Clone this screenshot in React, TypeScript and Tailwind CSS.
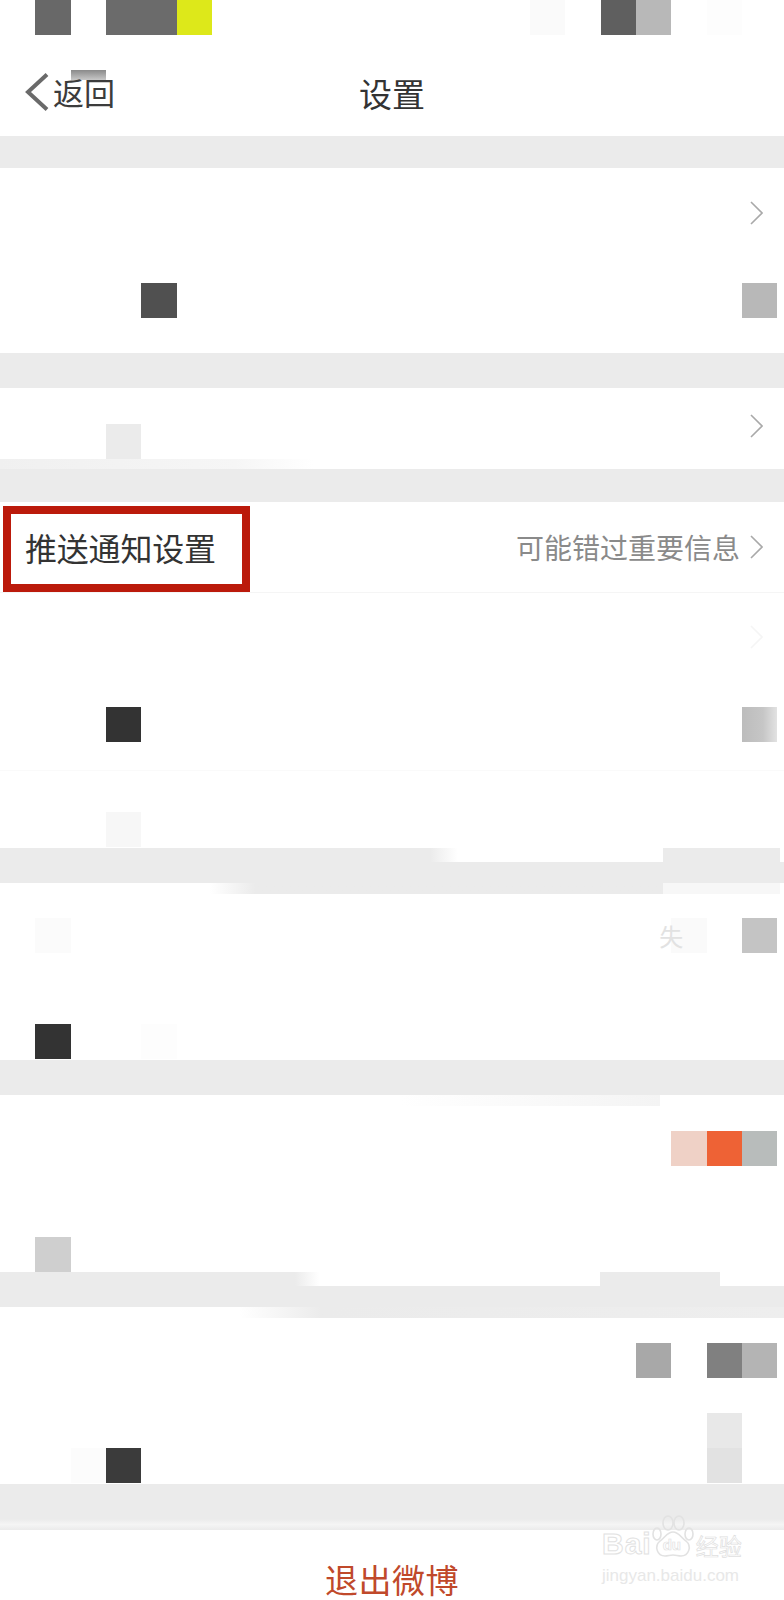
const cjk = 'font-["Noto_Sans_CJK_SC","Noto_Sans",sans-serif]';

const Chevron = ({ className = 'stroke-[#a9a9a9]' }: { className?: string }) => (
  <svg width="13" height="24" viewBox="0 0 13 24" fill="none" className={'block ' + className}>
    <polyline points="1,1 12,12 1,23" strokeWidth="1.6" />
  </svg>
);

const TileRow = ({ className = '', children }: { className?: string; children: React.ReactNode }) => (
  <div className={'grid grid-cols-[repeat(22,35.33px)] ' + className}>{children}</div>
);

const Tile = ({ className, children }: { className: string; children?: React.ReactNode }) => (
  <div className={'h-[35px] ' + className}>{children}</div>
);

// grey separators, smeared by the mosaic at their edges
const Band = ({ className }: { className: string }) => <div className={'bg-[#ebebeb] ' + className} />;

const Paw = () => (
  <svg width="44" height="44" viewBox="0 0 44 44" fill="none" stroke="#e2e2e2" strokeWidth="1.6" className="block">
    <ellipse cx="17" cy="8" rx="5" ry="7" />
    <ellipse cx="28" cy="8" rx="5" ry="7" />
    <ellipse cx="6" cy="19" rx="4" ry="6" />
    <ellipse cx="38" cy="19" rx="4" ry="6" />
    <path d="M22 17c6 0 8 6 13 9 6 5 3 15-5 15-3 0-5-1-8-1s-5 1-8 1c-8 0-11-10-5-15 5-3 7-9 13-9z" />
  </svg>
);

export default function App() {
  return (
    <div className={'relative w-[784px] h-[1600px] overflow-hidden bg-white ' + cjk}>
      {/* status bar */}
      <TileRow>
        <Tile className="col-start-2 bg-[#686868]" />
        <Tile className="col-start-4 bg-[#6b6b6b]" />
        <Tile className="col-start-5 bg-[#6b6b6b]" />
        <Tile className="col-start-6 bg-[#dde81a]" />
        <Tile className="col-start-16 bg-[#fafafa]" />
        <Tile className="col-start-18 bg-[#5f5f5f]" />
        <Tile className="col-start-19 bg-[#b8b8b8]" />
        <Tile className="col-start-21 bg-[#fdfdfd]" />
      </TileRow>

      {/* nav */}
      <div className="relative flex items-center justify-center h-[101px]">
        <div className="absolute left-[25px] top-[38px] flex items-center gap-[4px]">
          <svg width="24" height="38" viewBox="0 0 24 38" fill="none" stroke="#6a6a6a" strokeWidth="4" className="block">
            <polyline points="22,1.5 3,19 22,36.5" />
          </svg>
          <span className="relative text-[31px] leading-[38px] text-[#3c3c3c]">
            <span className="absolute left-[18px] top-[-3px] w-[35px] h-[10px] bg-linear-to-b from-[#8a8a8a] to-[#c8c8c8]" />
            <span className="relative">返回</span>
          </span>
        </div>
        <span className="text-[33px] leading-[40px] text-[#333333] mt-[14px]">设置</span>
      </div>

      <Band className="h-8" />

      {/* group 1 */}
      <div className="h-[185px] pt-[33px]">
        <div className="flex justify-end pr-[21px]">
          <Chevron />
        </div>
        <TileRow className="mt-[58px]">
          <Tile className="col-start-5 bg-[#505050]" />
          <Tile className="col-start-22 bg-[#b8b8b8]" />
        </TileRow>
      </div>

      <Band className="h-[35px]" />

      {/* group 2 */}
      <TileRow className="h-[71px] pt-[26px]">
        <Tile className="col-start-4 mt-[10px] bg-[#ebebeb]" />
        <div className="col-start-22 ml-2">
          <Chevron />
        </div>
      </TileRow>
      <div className="h-[10px] bg-linear-to-r from-[#f0f0f0] via-[#f6f6f6] via-30% to-white to-40%" />
      <Band className="h-[33px]" />

      {/* push settings row */}
      <div className="flex h-[91px] items-end justify-between border-b border-[#f5f5f5]">
        <div className="ml-[3px] flex h-[86px] w-[247px] items-center border-[8px] border-[#bb1a0b] pb-[4px] pl-[14px]">
          <span className="text-[32px] leading-[40px] tracking-[-0.2px] text-[#333333] whitespace-nowrap">推送通知设置</span>
        </div>
        <div className="flex h-[90px] items-center gap-[10px] pr-[21px]">
          <span className="text-[28px] leading-[36px] text-[#8a8a8a] whitespace-nowrap">可能错过重要信息</span>
          <Chevron />
        </div>
      </div>

      {/* group 3 */}
      <div className="h-[255px] pt-[32px]">
        <div className="flex justify-end pr-[21px]">
          <Chevron className="stroke-[#f5f5f5]" />
        </div>
        <TileRow className="mt-[58px]">
          <Tile className="col-start-4 bg-[#333333]" />
          <Tile className="col-start-22 bg-linear-to-r from-[#bcbcbc] via-[#c6c6c6] via-60% to-[#e2e2e2]" />
        </TileRow>
        <div className="h-[29px] border-b border-[#fafafa]" />
        <TileRow className="mt-[41px]">
          <Tile className="col-start-4 bg-[#f7f7f7]" />
        </TileRow>
      </div>

      {/* band 3 */}
      <div className="flex h-[14px]">
        <Band className="w-[430px]" />
        <div className="w-[233px] bg-linear-to-r from-[#ebebeb] to-white to-12%" />
        <Band className="w-[117px]" />
      </div>
      <Band className="h-[21px]" />

      {/* group 4 */}
      <div className="relative h-[177px]">
        <div className="absolute left-[210px] top-0 flex h-[11px] w-[570px]">
          <div className="w-[453px] bg-linear-to-r from-white via-[#ebebeb] via-10% to-[#ebebeb]" />
          <div className="flex-1 bg-[#f7f7f7]" />
        </div>
        <TileRow className="pt-[35px]">
          <Tile className="col-start-2 bg-[#fbfbfb]" />
          <Tile className="col-start-20 bg-[#fafafa]">
            <span className="-ml-3 block text-[24px] leading-[35px] text-[#e2e2e2]">失</span>
          </Tile>
          <Tile className="col-start-22 bg-[#c4c4c4]" />
        </TileRow>
        <TileRow className="mt-[71px]">
          <Tile className="col-start-2 bg-[#333333]" />
          <Tile className="col-start-5 bg-[#fdfdfd]" />
        </TileRow>
      </div>

      <Band className="h-[35px]" />

      {/* group 5 */}
      <div className="relative h-[177px] pt-[36px]">
        <div className="absolute left-[400px] top-0 h-[11px] w-[260px] bg-linear-to-r from-white to-[#f4f4f4]" />
        <TileRow>
          <Tile className="col-start-20 bg-[#efd1c6]" />
          <Tile className="col-start-21 bg-[#ee6235]" />
          <Tile className="col-start-22 bg-[#b8bcbb]" />
        </TileRow>
        <TileRow className="mt-[71px]">
          <Tile className="col-start-2 bg-[#cfcfcf]" />
        </TileRow>
      </div>

      {/* band 5 */}
      <div className="flex h-[14px]">
        <Band className="w-[295px]" />
        <div className="w-[305px] bg-linear-to-r from-[#ebebeb] to-white to-[8%]" />
        <Band className="w-[120px]" />
      </div>
      <Band className="h-[21px]" />

      {/* group 6 */}
      <div className="relative h-[177px]">
        <div className="absolute left-[240px] right-0 top-0 h-[11px] bg-linear-to-r from-white via-[#ebebeb] via-15% to-[#eeeeee]" />
        <TileRow className="pt-[36px]">
          <Tile className="col-start-19 bg-[#a8a8a8]" />
          <Tile className="col-start-21 bg-[#808080]" />
          <Tile className="col-start-22 bg-[#b4b4b4]" />
        </TileRow>
        <TileRow className="mt-[35px]">
          <Tile className="col-start-21 bg-[#e8e8e8]" />
        </TileRow>
        <TileRow>
          <Tile className="col-start-3 bg-[#fcfcfc]" />
          <Tile className="col-start-4 bg-[#3b3b3b]" />
          <Tile className="col-start-21 bg-[#e2e2e2]" />
        </TileRow>
      </div>

      {/* last band */}
      <Band className="h-[35px]" />
      <div className="h-[11px] bg-linear-to-b from-[#ebebeb] via-[#f5f5f5] to-[#ebebeb]" />

      {/* logout */}
      <div className="flex justify-center pt-[29px]">
        <span className="block text-[33px] leading-[40px] tracking-[0.5px] text-[#c0492b]">退出微博</span>
      </div>

      {/* watermark */}
      <div className="absolute left-[602px] top-[1515px] w-[142px]">
        <div className="flex items-end">
          <span className='font-["Liberation_Sans",sans-serif] text-[30px] leading-[30px] font-bold tracking-[1px] text-white [-webkit-text-stroke:1px_#e2e2e2]'>Bai</span>
          <div className="relative ml-[-1px]">
            <Paw />
            <span className='absolute left-[12px] top-[22px] font-["Liberation_Sans",sans-serif] text-[15px] leading-[16px] font-bold text-white [-webkit-text-stroke:0.7px_#e2e2e2]'>du</span>
          </div>
          <span className="ml-[1px] text-[23px] leading-[28px] text-white [-webkit-text-stroke:0.7px_#e0e0e0] whitespace-nowrap">经验</span>
        </div>
        <div className='mt-[8px] font-["Liberation_Sans",sans-serif] text-[17px] leading-[18px] text-[#e8e8e8] whitespace-nowrap'>jingyan.baidu.com</div>
      </div>
    </div>
  );
}
